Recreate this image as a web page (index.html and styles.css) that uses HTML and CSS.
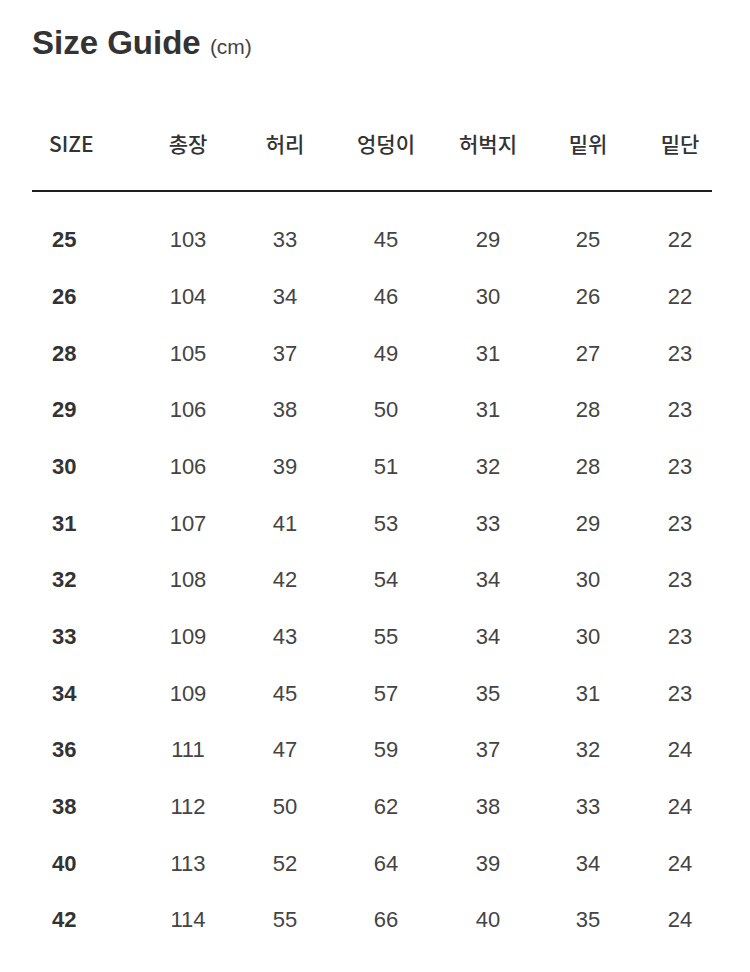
FILE: index.html
```html
<!DOCTYPE html>
<html lang="ko">
<head>
<meta charset="utf-8">
<title>Size Guide</title>
<link rel="stylesheet" href="styles.css">
</head>
<body>
<div class="page">
  <h1 class="title">Size Guide <span class="unit">(cm)</span></h1>
  <div class="row head">
    <div class="cell first">SIZE</div>
    <div class="cell">총장</div>
    <div class="cell">허리</div>
    <div class="cell">엉덩이</div>
    <div class="cell">허벅지</div>
    <div class="cell">밑위</div>
    <div class="cell">밑단</div>
  </div>
  <div class="divider"></div>
  <div class="body">
    <div class="row"><div class="cell first">25</div><div class="cell">103</div><div class="cell">33</div><div class="cell">45</div><div class="cell">29</div><div class="cell">25</div><div class="cell">22</div></div>
    <div class="row"><div class="cell first">26</div><div class="cell">104</div><div class="cell">34</div><div class="cell">46</div><div class="cell">30</div><div class="cell">26</div><div class="cell">22</div></div>
    <div class="row"><div class="cell first">28</div><div class="cell">105</div><div class="cell">37</div><div class="cell">49</div><div class="cell">31</div><div class="cell">27</div><div class="cell">23</div></div>
    <div class="row"><div class="cell first">29</div><div class="cell">106</div><div class="cell">38</div><div class="cell">50</div><div class="cell">31</div><div class="cell">28</div><div class="cell">23</div></div>
    <div class="row"><div class="cell first">30</div><div class="cell">106</div><div class="cell">39</div><div class="cell">51</div><div class="cell">32</div><div class="cell">28</div><div class="cell">23</div></div>
    <div class="row"><div class="cell first">31</div><div class="cell">107</div><div class="cell">41</div><div class="cell">53</div><div class="cell">33</div><div class="cell">29</div><div class="cell">23</div></div>
    <div class="row"><div class="cell first">32</div><div class="cell">108</div><div class="cell">42</div><div class="cell">54</div><div class="cell">34</div><div class="cell">30</div><div class="cell">23</div></div>
    <div class="row"><div class="cell first">33</div><div class="cell">109</div><div class="cell">43</div><div class="cell">55</div><div class="cell">34</div><div class="cell">30</div><div class="cell">23</div></div>
    <div class="row"><div class="cell first">34</div><div class="cell">109</div><div class="cell">45</div><div class="cell">57</div><div class="cell">35</div><div class="cell">31</div><div class="cell">23</div></div>
    <div class="row"><div class="cell first">36</div><div class="cell">111</div><div class="cell">47</div><div class="cell">59</div><div class="cell">37</div><div class="cell">32</div><div class="cell">24</div></div>
    <div class="row"><div class="cell first">38</div><div class="cell">112</div><div class="cell">50</div><div class="cell">62</div><div class="cell">38</div><div class="cell">33</div><div class="cell">24</div></div>
    <div class="row"><div class="cell first">40</div><div class="cell">113</div><div class="cell">52</div><div class="cell">64</div><div class="cell">39</div><div class="cell">34</div><div class="cell">24</div></div>
    <div class="row"><div class="cell first">42</div><div class="cell">114</div><div class="cell">55</div><div class="cell">66</div><div class="cell">40</div><div class="cell">35</div><div class="cell">24</div></div>
  </div>
</div>
</body>
</html>
```

FILE: styles.css
```css
html, body {
  margin: 0;
  padding: 0;
  background: #ffffff;
}

.page {
  padding: 23px 32px 0 32px;
  font-family: "Liberation Sans", Arial, "Noto Sans CJK KR", sans-serif;
  color: #444444;
}

.title {
  margin: 0;
  font-size: 33px;
  line-height: 40px;
  font-weight: 700;
  color: #333333;
}

.unit {
  font-size: 21px;
  font-weight: 400;
  color: #444444;
}

.row {
  display: grid;
  grid-template-columns: 108px 96px 98px 104px 100px 100px 84px;
  align-items: center;
  height: 56.67px;
}

.cell {
  text-align: center;
  white-space: nowrap;
}

.head {
  margin-top: 48px;
  height: 56px;
  font-family: "Noto Sans CJK KR", "Liberation Sans", sans-serif;
  font-size: 21px;
  font-weight: 500;
  color: #333333;
}

.head .first {
  text-align: left;
  padding-left: 17px;
}

.divider {
  width: 680px;
  height: 2px;
  margin-top: 19px;
  background: #1e1e1e;
}

.body {
  margin-top: 20px;
  font-size: 22px;
  color: #444444;
}

.body .first {
  text-align: left;
  padding-left: 20px;
  font-weight: 700;
  color: #333333;
}
```
